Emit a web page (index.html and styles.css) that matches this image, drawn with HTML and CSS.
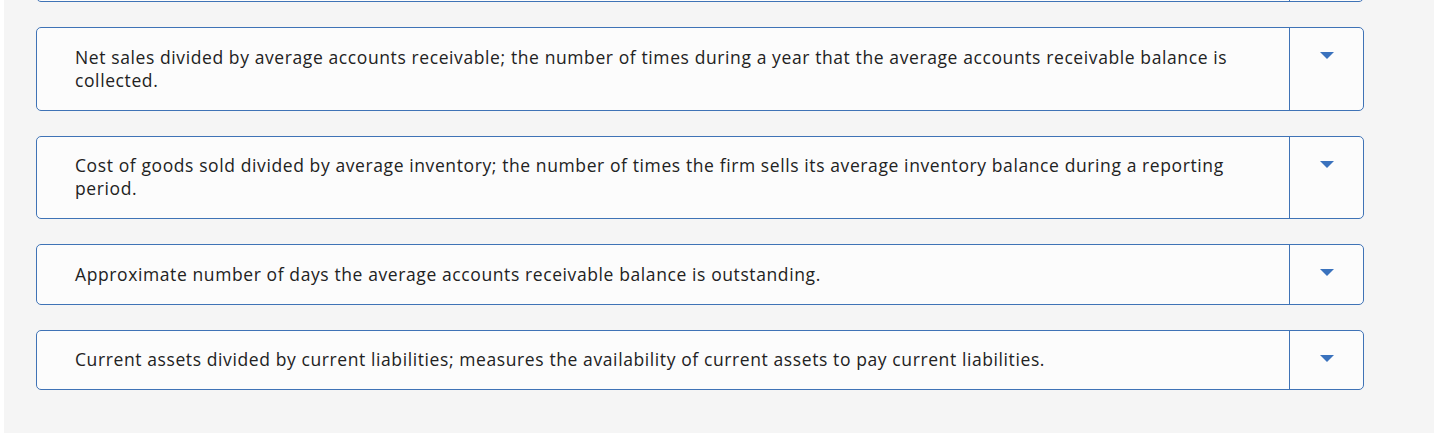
FILE: index.html
```html
<!DOCTYPE html>
<html>
<head>
<meta charset="utf-8">
<link rel="stylesheet" href="styles.css">
</head>
<body>
<div class="page">
  <div class="list">
    <div class="item item-cut">
      <div class="text">Ratio of items prior.</div>
      <div class="select"><span class="caret"></span></div>
    </div>
    <div class="item">
      <div class="text">Net sales divided by average accounts receivable; the number of times during a year that the average accounts receivable balance is collected.</div>
      <div class="select"><span class="caret"></span></div>
    </div>
    <div class="item">
      <div class="text">Cost of goods sold divided by average inventory; the number of times the firm sells its average inventory balance during a reporting period.</div>
      <div class="select"><span class="caret"></span></div>
    </div>
    <div class="item">
      <div class="text">Approximate number of days the average accounts receivable balance is outstanding.</div>
      <div class="select"><span class="caret"></span></div>
    </div>
    <div class="item">
      <div class="text">Current assets divided by current liabilities; measures the availability of current assets to pay current liabilities.</div>
      <div class="select"><span class="caret"></span></div>
    </div>
  </div>
</div>
</body>
</html>
```
FILE: styles.css
```css
html, body {
  margin: 0;
  padding: 0;
  background: #ffffff;
}
.page {
  margin: 0 4px;
  height: 433px;
  background: #f5f5f5;
  overflow: hidden;
  font-family: "Open Sans", "Lato", sans-serif;
  color: #222222;
}
.list {
  display: flex;
  flex-direction: column;
  gap: 25px;
  width: 1328px;
  margin-left: 32px;
}
.item {
  display: flex;
  border: 1px solid #3f73b6;
  border-radius: 5px;
  background: #fcfcfc;
}
.item-cut {
  margin-top: -80px;
  height: 80px;
}
.text {
  flex: 1;
  padding: 17.75px 38px 17.75px 38px;
  font-size: 17.5px;
  letter-spacing: 0.6px;
  line-height: 23px;
}
.item-cut .text {
  visibility: hidden;
}
.select {
  width: 73px;
  border-left: 1px solid #3f73b6;
  display: flex;
  justify-content: center;
  align-items: flex-start;
  padding-top: 24px;
}
.caret {
  width: 0;
  height: 0;
  border-left: 7px solid transparent;
  border-right: 7px solid transparent;
  border-top: 7px solid #3a72bd;
}
```
